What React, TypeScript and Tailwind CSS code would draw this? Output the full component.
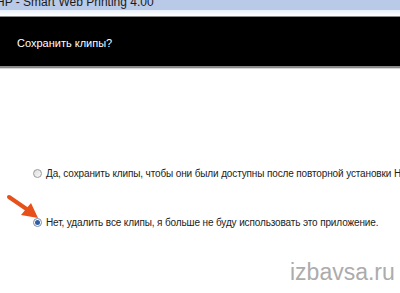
export default function App() {
  return (
    <div className="relative w-[400px] h-[293px] overflow-hidden bg-white font-['Liberation_Sans',sans-serif]">
      <div className="h-[10px] bg-[#b9c9e8] overflow-hidden">
        <div className="-mt-[5px] -ml-[4px] text-[12px] leading-[14px] text-[#1a1a1a] whitespace-nowrap">HP - Smart Web Printing 4.00</div>
      </div>
      <div className="h-[6px] bg-gradient-to-b from-[#e8f0fb] to-white" />
      <div className="h-[1px] bg-[#8a8a8a]" />
      <div className="h-[49px] bg-black flex items-center pl-[17px]">
        <span className="text-[11px] text-white mt-[3px]">Сохранить клипы?</span>
      </div>
      <div className="h-[2px] bg-[#8a8a8a]" />
      <div className="h-[1px] bg-[#d8d8d8]" />
      <div className="pl-[33px] pt-[98px] flex flex-col gap-[37px]">
        <div className="flex items-center gap-[4px] whitespace-nowrap h-[12px]">
          <span className="shrink-0 w-[9px] h-[9px] rounded-full border border-[#9a9a9a] bg-gradient-to-br from-[#dcdcdc] to-[#fafafa]" />
          <span className="text-[10px] tracking-[-0.13px] text-[#222]">Да, сохранить клипы, чтобы они были доступны после повторной установки HP</span>
        </div>
        <div className="flex items-center gap-[4px] whitespace-nowrap h-[12px]">
          <span className="shrink-0 w-[9px] h-[9px] rounded-full border border-[#7a8aa0] bg-white flex items-center justify-center">
            <span className="w-[5px] h-[5px] rounded-full bg-[#2d5fa8]" />
          </span>
          <span className="text-[10px] tracking-[-0.13px] text-[#222]">Нет, удалить все клипы, я больше не буду использовать это приложение.</span>
        </div>
      </div>
      <svg className="absolute left-[6px] top-[193px]" width="36" height="28" viewBox="0 0 36 28">
        <path d="M3 4 L22 17" stroke="#e8501a" strokeWidth="4" strokeLinecap="round" />
        <path d="M15 22 L32 25 L25 10 Z" fill="#e8501a" />
      </svg>
      <div className="absolute left-[290px] top-[255px] text-[23px] text-[#acacac]">izbavsa.ru</div>
    </div>
  )
}
